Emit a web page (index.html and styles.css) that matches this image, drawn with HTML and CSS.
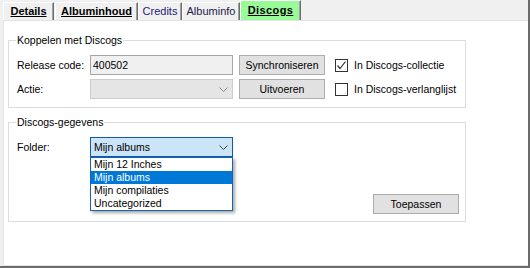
FILE: index.html
```html
<!DOCTYPE html>
<html lang="nl">
<head>
    <meta charset="UTF-8">
    <meta name="viewport" content="width=device-width, initial-scale=1.0">
    <title>Discogs</title>
    <link rel="stylesheet" href="styles.css">
</head>
<body>

    <div class="window">
        <div class="tabs">
            <div class="tab tab-bold tab-details">Details</div>
            <div class="tab tab-bold tab-content">Albuminhoud</div>
            <div class="tab tab-credits">Credits</div>
            <div class="tab tab-info">Albuminfo</div>
            <div class="tab tab-bold tab-active">Discogs</div>
        </div>

        <div class="panel">
            <fieldset class="group group-link">
                <legend>Koppelen met Discogs</legend>
                <div class="link-grid">
                    <span class="label">Release code:</span>
                    <div class="textbox">400502</div>
                    <button class="btn btn-grid">Synchroniseren</button>
                    <div class="check">
                        <span class="check-box">
                            <svg width="11" height="11" viewBox="0 0 11 11"><polyline points="1.5,5.5 4,8.5 9.5,1.5" fill="none" stroke="#333" stroke-width="1.2"/></svg>
                        </span>
                        <span>In Discogs-collectie</span>
                    </div>

                    <span class="label">Actie:</span>
                    <div class="combo combo-disabled">
                        <span></span>
                        <svg class="chevron" width="9" height="5" viewBox="0 0 9 5"><polyline points="0.5,0.5 4.5,4.5 8.5,0.5" fill="none" stroke="#8a8a8a"/></svg>
                    </div>
                    <button class="btn btn-grid">Uitvoeren</button>
                    <div class="check">
                        <span class="check-box"></span>
                        <span>In Discogs-verlanglijst</span>
                    </div>
                </div>
            </fieldset>

            <fieldset class="group group-data">
                <legend>Discogs-gegevens</legend>
                <div class="folder-row">
                    <span class="label">Folder:</span>
                    <div class="combo-wrap">
                        <div class="combo combo-focus">
                            <span>Mijn albums</span>
                            <svg class="chevron" width="9" height="5" viewBox="0 0 9 5"><polyline points="0.5,0.5 4.5,4.5 8.5,0.5" fill="none" stroke="#404040"/></svg>
                        </div>
                        <ul class="dropdown">
                            <li>Mijn 12 Inches</li>
                            <li class="selected">Mijn albums</li>
                            <li>Mijn compilaties</li>
                            <li>Uncategorized</li>
                        </ul>
                    </div>
                </div>
                <div class="actions">
                    <button class="btn">Toepassen</button>
                </div>
            </fieldset>
        </div>
    </div>

</body>
</html>
```

FILE: styles.css
```css
body {
    margin: 0;
    font-family: "Liberation Sans", Arial, sans-serif;
    font-size: 10.5px;
    color: #000;
}

.window {
    width: 530px;
    height: 268px;
    box-sizing: border-box;
    background-color: #f0f0f0;
    border-right: 2px solid #6b6b6b;
    border-bottom: 2px solid #6b6b6b;
}

/* tabbladen */
.tabs {
    display: flex;
    align-items: flex-end;
    height: 20px;
    padding-left: 3px;
}

.tab {
    height: 18px;
    box-sizing: border-box;
    border-top: 1px solid #fff;
    border-left: 1px solid #fff;
    border-right: 1px solid #6e6e6e;
    box-shadow: inset -1px 0 0 #a0a0a0;
    font-size: 11px;
    line-height: 17px;
    text-align: center;
}

.tab-bold {
    font-weight: bold;
    text-decoration: underline;
}

.tab-details { width: 51px; margin-right: 1px; }
.tab-content { width: 83px; }
.tab-credits { width: 44px; color: #1c1c78; }
.tab-info { width: 58px; color: #22224a; }

.tab-active {
    width: 61px;
    height: 20px;
    line-height: 19px;
    background-color: #98fb98;
    letter-spacing: 0.4px;
}

/* paneel */
.panel {
    height: 246px;
    margin-left: 3px;
    box-sizing: border-box;
    background-color: #fff;
    border-top: 1px solid #e3e3e3;
    border-left: 1px solid #e3e3e3;
    border-bottom: 1px solid #e3e3e3;
    padding: 13px 0 0 4px;
}

.group {
    width: 458px;
    box-sizing: border-box;
    margin: 0;
    border: 1px solid #dcdcdc;
    padding: 8px 6px 8px 8px;
}

.group legend {
    padding: 0 1px;
    margin-left: -1px;
    line-height: 13px;
}

.group-data {
    margin-top: 8px;
    padding-bottom: 7px;
}

.link-grid {
    display: grid;
    grid-template-columns: 73px 143px 92px auto;
    grid-auto-rows: 20px;
    row-gap: 4px;
    align-items: center;
}

.label {
    line-height: 20px;
}

.textbox {
    height: 20px;
    box-sizing: border-box;
    border: 1px solid #a6a6a6;
    background-color: #f0f0f0;
    padding-left: 2px;
    line-height: 18px;
}

.combo {
    display: flex;
    align-items: center;
    justify-content: space-between;
    height: 20px;
    box-sizing: border-box;
    padding: 0 4px 0 3px;
    line-height: 18px;
}

.combo-disabled {
    border: 1px solid #cccccc;
    background-color: #e5e5e5;
}

.combo-focus {
    border: 1px solid #0f5ca8;
    background-color: #cce4f7;
}

.btn {
    height: 20px;
    box-sizing: border-box;
    border: 1px solid #adadad;
    background-color: #e1e1e1;
    font-family: inherit;
    font-size: 10.5px;
    color: #000;
    padding: 0;
    width: 86px;
}

.btn-grid {
    margin-left: 6px;
}

.check {
    display: flex;
    align-items: center;
    gap: 6px;
    padding-left: 10px;
}

.check-box {
    display: flex;
    align-items: center;
    justify-content: center;
    width: 13px;
    height: 13px;
    box-sizing: border-box;
    border: 1px solid #333;
    background-color: #fff;
}

/* folder keuze */
.folder-row {
    display: flex;
    align-items: center;
}

.folder-row .label {
    width: 73px;
}

.combo-wrap {
    position: relative;
    width: 143px;
}

.dropdown {
    position: absolute;
    top: 100%;
    left: 0;
    width: 143px;
    box-sizing: border-box;
    margin: 0;
    padding: 0;
    list-style: none;
    background-color: #fff;
    border: 1px solid #1664b4;
    box-shadow: 2px 2px 3px rgba(0, 0, 0, 0.35);
    z-index: 2;
}

.dropdown li {
    height: 13px;
    line-height: 13px;
    padding-left: 3px;
}

.dropdown .selected {
    background-color: #0078d7;
    color: #fff;
}

.actions {
    display: flex;
    justify-content: flex-end;
    margin-top: 37px;
}
```
